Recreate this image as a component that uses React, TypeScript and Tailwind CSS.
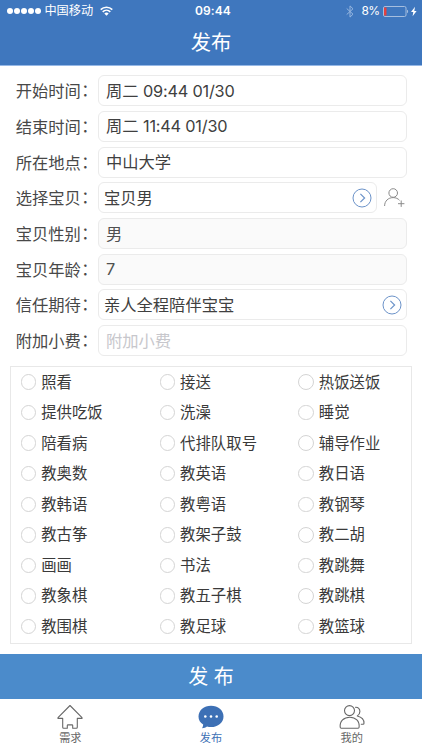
import React from "react";

const services = [
  ["照看", "接送", "热饭送饭"],
  ["提供吃饭", "洗澡", "睡觉"],
  ["陪看病", "代排队取号", "辅导作业"],
  ["教奥数", "教英语", "教日语"],
  ["教韩语", "教粤语", "教钢琴"],
  ["教古筝", "教架子鼓", "教二胡"],
  ["画画", "书法", "教跳舞"],
  ["教象棋", "教五子棋", "教跳棋"],
  ["教围棋", "教足球", "教篮球"],
];

function Chevron() {
  return (
    <svg className="h-5 w-5 shrink-0" viewBox="0 0 20 20" fill="none" stroke="#6c93c9" strokeWidth="1">
      <circle cx="10" cy="10" r="9" />
      <path d="M8.4 5.9l4.2 4.1-4.2 4.1" strokeWidth="1.2" />
    </svg>
  );
}

function AddPerson() {
  return (
    <svg className="h-5 w-[22px] shrink-0" viewBox="0 0 22 20" fill="none" stroke="#8a8a8a" strokeWidth="1">
      <circle cx="9.2" cy="5" r="4.3" />
      <path d="M.6 18c0-5 3.600-8.400 8.600-8.400 2.700 0 4.800 1 6.300 2.700M14 15.700h6.400M17.200 12.500v6.400" />
    </svg>
  );
}

type FieldProps = {
  label: string;
  value: string;
  time?: string;
  tone?: "normal" | "disabled" | "placeholder";
  picker?: boolean;
  extra?: React.ReactNode;
};

function Field({ label, value, time, tone = "normal", picker, extra }: FieldProps) {
  return (
    <div className="flex h-[35.7px] items-start pl-[15.7px]">
      <div className="h-[31px] w-[82.3px] shrink-0 whitespace-nowrap text-[16.3px] leading-[32px] text-[#484848]">
        {label}
        <span className="relative left-[0.5px] -top-px">：</span>
      </div>
      <div
        className={`flex h-[31px] min-w-0 flex-1 items-center justify-between rounded-[6px] border border-[#ebebeb] text-[16.3px] leading-[29px] ${
          picker ? "pl-[5px] pr-1" : "pl-[7px]"
        } ${tone === "disabled" ? "bg-[#fafafa]" : "bg-white"} ${
          tone === "placeholder" ? "text-[#c7c7cc]" : tone === "disabled" ? "text-[#505050]" : "text-[#404040]"
        }`}
      >
        <span className="pt-px">
          {value}
          {time && <span className="tracking-[-0.2px]"> {time}</span>}
        </span>
        {picker && <Chevron />}
      </div>
      {extra ? <div className="flex h-[31px] w-[45px] items-center pl-[7px]">{extra}</div> : <div className="w-[15px]" />}
    </div>
  );
}

function StatusBar() {
  return (
    <div className="flex h-[22px] items-center text-white">
      <div className="flex flex-1 items-center pl-[7px]">
        <div className="flex gap-[1.1px]">
          {[0, 1, 2, 3, 4].map((i) => (
            <span key={i} className="h-[6px] w-[6px] rounded-full bg-white" />
          ))}
        </div>
        <span className="ml-[3px] text-[12.2px] leading-[22px]">中国移动</span>
        <svg className="ml-[6.5px] h-[10px] w-[13px]" viewBox="0 0 13 10" fill="none" stroke="white" strokeWidth="1.600">
          <path d="M.7 3.600a8.300 8.300 0 0 1 11.600 0M2.700 5.800a5.500 5.500 0 0 1 7.600 0" />
          <path d="M4.300 7.500a3.200 3.200 0 0 1 4.400 0L6.500 9.700z" fill="white" stroke="none" />
        </svg>
      </div>
      <span className="pl-[2px] text-[12px] font-semibold tracking-[0.1px]">09:44</span>
      <div className="flex flex-1 items-center justify-end pr-[5px]">
        <svg className="mr-[7.5px] h-[13px] w-[8px]" viewBox="0 0 8 13" fill="none" stroke="#96b6df" strokeWidth="1">
          <path d="M.7 3.500l6.300 5.700-3 2.900V.9l3 2.900-6.300 5.700" />
        </svg>
        <span className="text-[12px] tracking-[-0.6px]">8%</span>
        <svg className="ml-[3.5px] h-[11px] w-[34px]" viewBox="0 0 34 11">
          <rect x=".5" y=".5" width="22.500" height="10" rx="1.500" fill="none" stroke="#a5bedf" />
          <path d="M1 1.500h2.500v8H1z" fill="#e5403f" />
          <path d="M24 3.800c1.500.3 1.500 3.100 0 3.400z" fill="#a5bedf" />
          <path d="M32 .8l-4 5.200h2.300l-.7 4.300 4-5.400h-2.300z" fill="white" />
        </svg>
      </div>
    </div>
  );
}

function Tab({ label, active, children }: { label: string; active?: boolean; children: React.ReactNode }) {
  return (
    <div className={`flex flex-1 flex-col items-center pt-[5px] text-[11.2px] ${active ? "text-[#3d70b5]" : "text-[#666]"}`}>
      <div className="flex h-[26px] items-center">{children}</div>
      <span className="leading-[17px]">{label}</span>
    </div>
  );
}

export default function App() {
  return (
    <div className="flex h-[750px] w-[422px] flex-col overflow-hidden bg-white font-[Inter,'Noto_Sans_CJK_SC',sans-serif]">
      <header className="h-[66px] shrink-0 border-b border-[#96b8e6] bg-[#3f77be]">
        <StatusBar />
        <h1 className="text-center text-[20.300px] leading-[41px] text-white">发布</h1>
      </header>

      <main className="h-[588px] shrink-0 pt-[9.300px]">
        <Field label="开始时间" value="周二" time="09:44 01/30" />
        <Field label="结束时间" value="周二" time="11:44 01/30" />
        <Field label="所在地点" value="中山大学" />
        <Field label="选择宝贝" value="宝贝男" picker extra={<AddPerson />} />
        <Field label="宝贝性别" value="男" tone="disabled" />
        <Field label="宝贝年龄" value="7" tone="disabled" />
        <Field label="信任期待" value="亲人全程陪伴宝宝" picker />
        <Field label="附加小费" value="附加小费" tone="placeholder" />

        <div className="ml-[10px] mt-[5px] h-[278px] w-[402px] border border-[#e8e8e8]">
          {services.map((row) => (
            <div key={row[0]} className="grid h-[30.550px] grid-cols-[138.900px_138.700px_1fr] pl-[9.700px]">
              {row.map((name) => (
                <div key={name} className="flex items-center gap-[5px] whitespace-nowrap text-[15.400px] text-[#3a3a3a]">
                  <span className="h-[15.500px] w-[15.500px] shrink-0 rounded-full border border-[#d4d4d4]" />
                  {name}
                </div>
              ))}
            </div>
          ))}
        </div>
      </main>

      <button className="h-[45px] shrink-0 bg-[#4b8bcb] pt-px text-center text-[20px] leading-[45px] text-white">发 布</button>

      <nav className="flex flex-1">
        <Tab label="需求">
          <svg className="h-[26px] w-[26px]" viewBox="0 0 26 26" fill="none" stroke="#686868" strokeWidth="1.100" strokeLinejoin="round">
            <path d="M13 1.500L1 13.600v.8h4.700v8.800q0 1 1 1h3.600v-2.600q0-.7.7-.7h4q.7 0 .7.700v2.600h3.600q1 0 1-1v-8.800H25v-.8z" />
          </svg>
        </Tab>
        <Tab label="发布" active>
          <svg className="h-[26px] w-[26px]" viewBox="0 0 26 26" fill="#3d70b5">
            <path d="M13 1.800c7 0 12.500 4.600 12.500 10.600S20 23 13 23c-1.400 0-2.700-.2-4-.6-1.300.9-3.100 1.700-4.900 1.800.7-1.100 1.100-2.400 1.100-3.600C2.300 18.700.5 15.800.5 12.400.5 6.400 6 1.800 13 1.800z" />
            <g fill="white">
              <circle cx="7.300" cy="12.500" r="1.300" />
              <circle cx="13" cy="12.500" r="1.300" />
              <circle cx="18.700" cy="12.500" r="1.300" />
            </g>
          </svg>
        </Tab>
        <Tab label="我的">
          <svg className="h-[26px] w-[26px]" viewBox="0 0 26 26" fill="none" stroke="#686868" strokeWidth="1.100" strokeLinecap="round" strokeLinejoin="round">
            <circle cx="10.500" cy="6.600" r="5" />
            <path d="M1.200 23.300C.5 17 5 13.200 10.800 13.200s10 4 9.300 10.100q-.1.900-1 .9H2.200q-.9 0-1-.9z" />
            <path d="M16.500 3.200c2.700-.2 4.400 1.600 4.400 4.400 0 2-1 3.500-2.600 4.400 4.300 1 6.800 4 6.700 7.300q0 1-1 1h-1.700" />
          </svg>
        </Tab>
      </nav>
    </div>
  );
}
